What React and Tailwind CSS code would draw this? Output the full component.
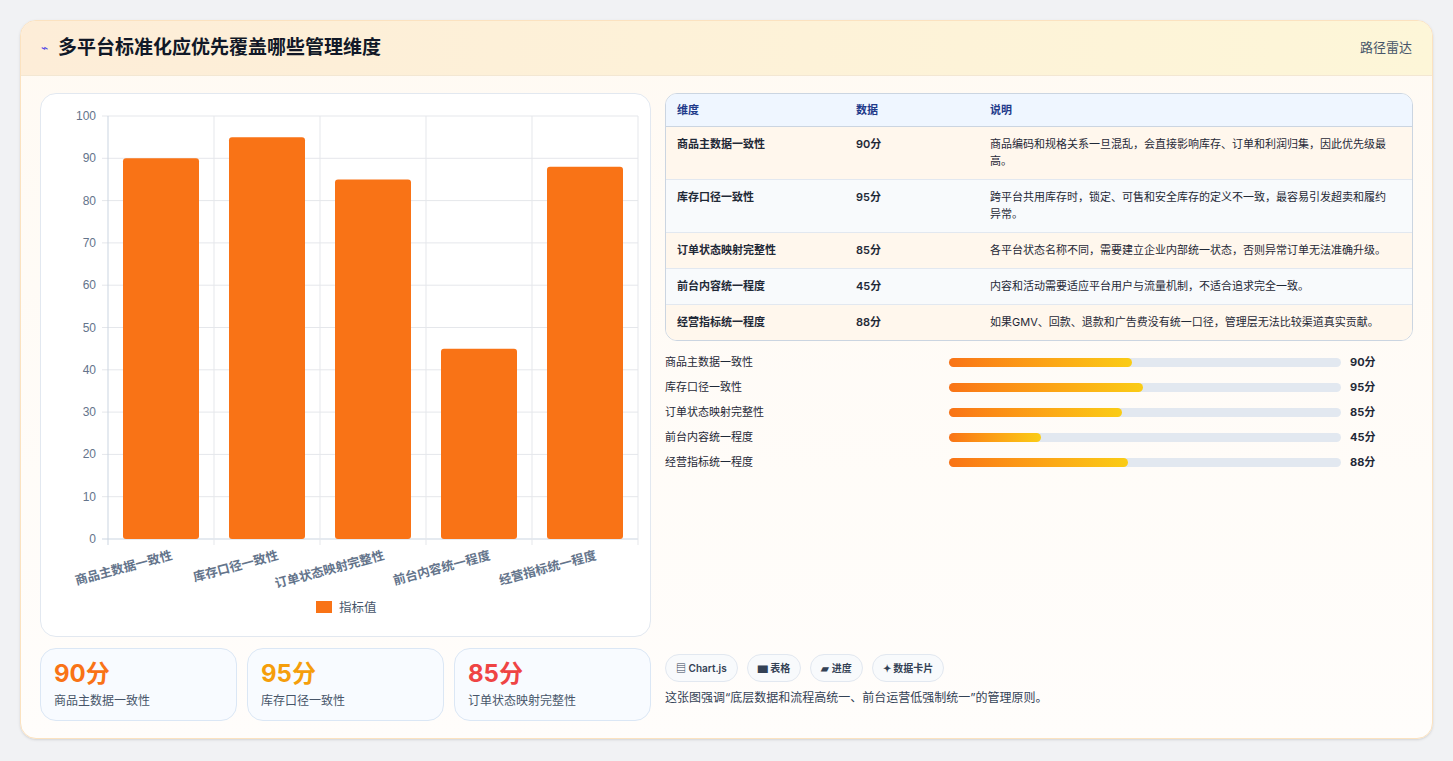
const data = [
  { name: "商品主数据一致性", v: 90, d: "商品编码和规格关系一旦混乱，会直接影响库存、订单和利润归集，因此优先级最高。" },
  { name: "库存口径一致性", v: 95, d: "跨平台共用库存时，锁定、可售和安全库存的定义不一致，最容易引发超卖和履约异常。" },
  { name: "订单状态映射完整性", v: 85, d: "各平台状态名称不同，需要建立企业内部统一状态，否则异常订单无法准确升级。" },
  { name: "前台内容统一程度", v: 45, d: "内容和活动需要适应平台用户与流量机制，不适合追求完全一致。" },
  { name: "经营指标统一程度", v: 88, d: "如果GMV、回款、退款和广告费没有统一口径，管理层无法比较渠道真实贡献。" },
];

function Chart() {
  const x0 = 67, y0 = 22, w = 530, h = 423;
  const cw = w / 5;
  return (
    <svg width="610" height="543" className="block">
      {Array.from({ length: 11 }).map((_, i) => {
        const y = y0 + h - (h * i) / 10;
        return (
          <g key={i}>
            <line x1={x0 - 6} x2={x0 + w} y1={y} y2={y} stroke={i === 0 ? "#cbd5e1" : "#e5e7eb"} />
            <text x={x0 - 12} y={y + 4} textAnchor="end" fontSize="12" fill="#64748b" fontFamily="Liberation Sans, sans-serif">{i * 10}</text>
          </g>
        );
      })}
      {Array.from({ length: 6 }).map((_, i) => (
        <line key={i} x1={x0 + i * cw} x2={x0 + i * cw} y1={y0} y2={y0 + h + 6} stroke={i === 0 ? "#cbd5e1" : "#e5e7eb"} />
      ))}
      {data.map((d, i) => {
        const bh = (h * d.v) / 100;
        const bx = x0 + i * cw + 15;
        const cx = x0 + i * cw + cw / 2;
        return (
          <g key={i}>
            <rect x={bx} y={y0 + h - bh} width={76} height={bh} rx="3" fill="#f97316" />
            <text x={cx + 12} y={y0 + h + 20} textAnchor="end" fontSize="12.5" fontWeight="600" fill="#64748b" transform={`rotate(-15 ${cx + 12} ${y0 + h + 20})`} fontFamily="Noto Sans CJK SC, sans-serif">{d.name}</text>
          </g>
        );
      })}
      <rect x="275" y="507" width="16" height="12" fill="#f97316" />
      <text x="298" y="518" fontSize="12.5" fill="#475569" fontFamily="Noto Sans CJK SC, sans-serif">指标值</text>
    </svg>
  );
}

export default function App() {
  return (
    <div className="w-[1453px] h-[761px] bg-[#f1f2f4] pt-5 px-5" style={{ fontFamily: "Inter, 'Noto Sans CJK SC', sans-serif" }}>
      <div className="h-[719px] rounded-2xl border border-[#fbe2c0] bg-gradient-to-b from-[#fffaf3] to-[#fffdfb] overflow-hidden shadow-sm">
        <div className="h-[55px] flex items-center justify-between px-5 bg-gradient-to-r from-[#fdedd8] to-[#fdf6d8] border-b border-[#f3e7d3]">
          <div className="flex items-center gap-2.5">
            <span className="text-[12px] text-[#4f46e5]">⌁</span>
            <span className="text-[19px] font-bold text-[#111827]">多平台标准化应优先覆盖哪些管理维度</span>
          </div>
          <span className="text-[13px] text-[#475569]">路径雷达</span>
        </div>
        <div className="flex gap-[14px] px-[19px] pt-[17px]">
          <div className="w-[611px] flex flex-col gap-[11px]">
            <div className="h-[544px] bg-white rounded-2xl border border-[#e2e8f0]">
              <Chart />
            </div>
            <div className="flex gap-[10px]">
              {[["90分", "text-[#f97316]"], ["95分", "text-[#f59e0b]"], ["85分", "text-[#ef4444]"]].map(([v, c], i) => (
                <div key={i} className="flex-1 h-[73px] rounded-2xl border border-[#dbe7f5] bg-[#f8fbff] px-[13px] pt-[10px]">
                  <div className={`text-[24px] font-bold leading-[30px] ${c}`}>{v}</div>
                  <div className="text-[12px] text-[#475569] mt-[3px]">{data[i].name}</div>
                </div>
              ))}
            </div>
          </div>
          <div className="flex-1 flex flex-col">
            <div className="rounded-xl border border-[#cbd5e1] overflow-hidden bg-white">
              <div className="flex h-[33px] items-center bg-[#eff6ff] border-b border-[#cbd5e1] text-[11px] font-bold text-[#1e3a8a]">
                <div className="w-[190px] pl-[11px]">维度</div>
                <div className="w-[134px]">数据</div>
                <div>说明</div>
              </div>
              {data.map((d, i) => (
                <div key={i} className={`flex py-[9px] text-[11px] leading-[17px] text-[#1f2937] ${i > 0 ? "border-t border-[#e2e8f0]" : ""} ${i % 2 === 0 ? "bg-[#fff7ed]" : "bg-[#f8fafc]"}`}>
                  <div className="w-[190px] pl-[11px] font-semibold">{d.name}</div>
                  <div className="w-[134px] font-semibold">{d.v}分</div>
                  <div className="flex-1 pr-[18px]">{d.d}</div>
                </div>
              ))}
            </div>
            <div className="mt-[12px] flex flex-col gap-[7px]">
              {data.map((d, i) => (
                <div key={i} className="flex items-center h-[18px] text-[11px]">
                  <div className="w-[284px] text-[#1f2937]">{d.name}</div>
                  <div className="w-[392px] h-[9px] rounded-full bg-[#e2e8f0]">
                    <div className="h-full rounded-full bg-gradient-to-r from-[#f97316] to-[#facc15]" style={{ width: `${d.v * 0.52}%` }} />
                  </div>
                  <div className="ml-[9px] font-bold text-[#1f2937]">{d.v}分</div>
                </div>
              ))}
            </div>
            <div className="mt-auto flex gap-[9px] mb-[7px]">
              {["▤ Chart.js", "▆ 表格", "▰ 进度", "✦ 数据卡片"].map((t) => (
                <span key={t} className="h-[28px] px-[10px] flex items-center rounded-full border border-[#e2e8f0] bg-[#f8fafc] text-[10px] font-semibold text-[#334155]">{t}</span>
              ))}
            </div>
            <div className="text-[12px] text-[#334155] mb-[14px]">这张图强调“底层数据和流程高统一、前台运营低强制统一”的管理原则。</div>
          </div>
        </div>
      </div>
    </div>
  );
}
